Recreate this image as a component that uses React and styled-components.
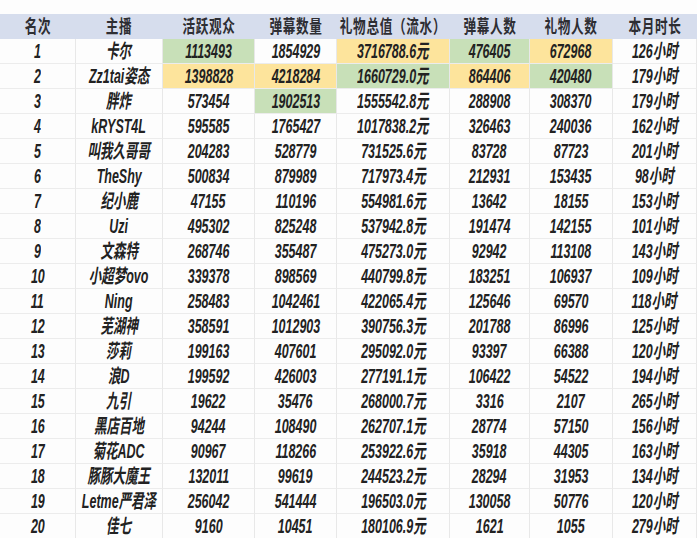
import styled, { createGlobalStyle } from "styled-components";

const GlobalStyle = createGlobalStyle`
  body {
    margin: 0;
    background: #fdfdfd;
    font-family: "Liberation Sans", "Noto Sans CJK SC", sans-serif;
  }
`;

const Page = styled.div`
  width: 697px;
  height: 538px;
  padding-top: 14px;
  box-sizing: border-box;
  overflow: hidden;
  background: #fdfdfd;
`;

const Grid = styled.div`
  display: grid;
  grid-template-columns: 76px 87px 92px 82px 113px 80px 83px 84px;
  grid-auto-rows: 25px;
`;

const bg = {
  head: "#d6dded",
  green: "#c8e0b8",
  yellow: "#fde49c",
  none: "transparent",
};

const Cell = styled.div`
  display: flex;
  align-items: center;
  justify-content: center;
  box-sizing: border-box;
  background: ${(p) => bg[p.$tone || "none"]};
  border-right: 1px solid ${(p) => (p.$tone === "head" ? "transparent" : "#e8e8e8")};
  border-bottom: 1px solid ${(p) => (p.$tone === "head" ? "transparent" : "#ececec")};
  white-space: nowrap;
`;

const Text = styled.span`
  display: inline-block;
  font-size: ${(p) => (p.$head ? "18px" : "19.5px")};
  font-weight: bold;
  font-style: ${(p) => (p.$head ? "normal" : "italic")};
  color: ${(p) => (p.$head ? "#2e2e33" : "#222")};
  transform: scaleX(${(p) => (p.$head ? 0.7 : 0.64)});
  letter-spacing: ${(p) => (p.$head ? "1px" : "0")};
  line-height: 1;
  padding-top: 1px;
`;

const headers = ["名次", "主播", "活跃观众", "弹幕数量", "礼物总值（流水）", "弹幕人数", "礼物人数", "本月时长"];

const rows = [
  ["1", "卡尔", "1113493", "1854929", "3716788.6元", "476405", "672968", "126小时"],
  ["2", "Zz1tai姿态", "1398828", "4218284", "1660729.0元", "864406", "420480", "179小时"],
  ["3", "胖炸", "573454", "1902513", "1555542.8元", "288908", "308370", "179小时"],
  ["4", "kRYST4L", "595585", "1765427", "1017838.2元", "326463", "240036", "162小时"],
  ["5", "叫我久哥哥", "204283", "528779", "731525.6元", "83728", "87723", "201小时"],
  ["6", "TheShy", "500834", "879989", "717973.4元", "212931", "153435", "98小时"],
  ["7", "纪小鹿", "47155", "110196", "554981.6元", "13642", "18155", "153小时"],
  ["8", "Uzi", "495302", "825248", "537942.8元", "191474", "142155", "101小时"],
  ["9", "文森特", "268746", "355487", "475273.0元", "92942", "113108", "143小时"],
  ["10", "小超梦ovo", "339378", "898569", "440799.8元", "183251", "106937", "109小时"],
  ["11", "Ning", "258483", "1042461", "422065.4元", "125646", "69570", "118小时"],
  ["12", "芜湖神", "358591", "1012903", "390756.3元", "201788", "86996", "125小时"],
  ["13", "莎莉", "199163", "407601", "295092.0元", "93397", "66388", "120小时"],
  ["14", "浪D", "199592", "426003", "277191.1元", "106422", "54522", "194小时"],
  ["15", "九引", "19622", "35476", "268000.7元", "3316", "2107", "265小时"],
  ["16", "黑店百地", "94244", "108490", "262707.1元", "28774", "57150", "156小时"],
  ["17", "菊花ADC", "90967", "118266", "253922.6元", "35918", "44305", "163小时"],
  ["18", "豚豚大魔王", "132011", "99619", "244523.2元", "28294", "31953", "134小时"],
  ["19", "Letme严君泽", "256042", "541444", "196503.0元", "130058", "50776", "120小时"],
  ["20", "佳七", "9160", "10451", "180106.9元", "1621", "1055", "279小时"],
];

const tones = {
  0: [null, null, "green", null, "yellow", "green", "yellow", null],
  1: [null, null, "yellow", "yellow", "green", "yellow", "green", null],
  2: [null, null, null, "green", null, null, null, null],
};

export default function App() {
  return (
    <Page>
      <GlobalStyle />
      <Grid>
        {headers.map((h) => (
          <Cell key={h} $tone="head">
            <Text $head>{h}</Text>
          </Cell>
        ))}
        {rows.map((row, r) =>
          row.map((value, c) => (
            <Cell key={`${r}-${c}`} $tone={(tones[r] && tones[r][c]) || "none"}>
              <Text>{value}</Text>
            </Cell>
          ))
        )}
      </Grid>
    </Page>
  );
}
